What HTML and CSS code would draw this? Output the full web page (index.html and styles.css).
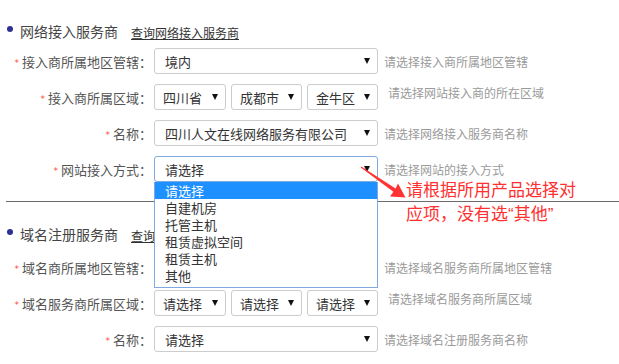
FILE: index.html
```html
<!DOCTYPE html>
<html lang="zh-CN">
<head>
<meta charset="utf-8">
<title>服务商信息</title>
<link rel="stylesheet" href="styles.css">
</head>
<body>
<div class="page">
  <section class="group">
    <h2 class="group-title"><span class="dot"></span><span>网络接入服务商</span><a class="query" href="#">查询网络接入服务商</a></h2>
    <div class="row">
      <label class="lbl"><span class="req">*</span>接入商所属地区管辖：</label>
      <div class="sel sel-wide"><span class="val">境内</span><span class="caret"></span></div>
      <span class="hint">请选择接入商所属地区管辖</span>
    </div>
    <div class="row">
      <label class="lbl"><span class="req">*</span>接入商所属区域：</label>
      <div class="sel-group">
        <div class="sel sel-small sel-first"><span class="val">四川省</span><span class="caret"></span></div>
        <div class="sel sel-small"><span class="val">成都市</span><span class="caret"></span></div>
        <div class="sel sel-small"><span class="val">金牛区</span><span class="caret"></span></div>
      </div>
      <span class="hint hint-up">请选择网站接入商的所在区域</span>
    </div>
    <div class="row">
      <label class="lbl"><span class="req">*</span>名称：</label>
      <div class="sel sel-wide"><span class="val">四川人文在线网络服务有限公司</span><span class="caret"></span></div>
      <span class="hint">请选择网络接入服务商名称</span>
    </div>
    <div class="row">
      <label class="lbl"><span class="req">*</span>网站接入方式：</label>
      <div class="sel sel-wide sel-focus"><span class="val">请选择</span><span class="caret"></span>
        <ul class="dropdown">
          <li class="active">请选择</li>
          <li>自建机房</li>
          <li>托管主机</li>
          <li>租赁虚拟空间</li>
          <li>租赁主机</li>
          <li>其他</li>
        </ul>
      </div>
      <span class="hint">请选择网站的接入方式</span>
    </div>
  </section>
  <hr class="divider">
  <section class="group">
    <h2 class="group-title group-title-second"><span class="dot"></span><span>域名注册服务商</span><a class="query" href="#">查询域名注册服务商</a></h2>
    <div class="row">
      <label class="lbl"><span class="req">*</span>域名商所属地区管辖：</label>
      <div class="sel sel-wide"><span class="val">请选择</span><span class="caret"></span></div>
      <span class="hint">请选择域名服务商所属地区管辖</span>
    </div>
    <div class="row">
      <label class="lbl"><span class="req">*</span>域名服务商所属区域：</label>
      <div class="sel-group">
        <div class="sel sel-small sel-first"><span class="val">请选择</span><span class="caret"></span></div>
        <div class="sel sel-small"><span class="val">请选择</span><span class="caret"></span></div>
        <div class="sel sel-small"><span class="val">请选择</span><span class="caret"></span></div>
      </div>
      <span class="hint hint-up">请选择域名服务商所属区域</span>
    </div>
    <div class="row">
      <label class="lbl"><span class="req">*</span>名称：</label>
      <div class="sel sel-wide"><span class="val">请选择</span><span class="caret"></span></div>
      <span class="hint">请选择域名注册服务商名称</span>
    </div>
  </section>

  <div class="note">请根据所用产品选择对<br>应项，没有选<span class="q">“</span>其他<span class="q">”</span></div>
  <svg class="pointer" width="60" height="45" viewBox="0 0 60 45">
    <polygon points="6.3,6.6 40.6,28.4 43,23.5 50.5,37.5 35,36.5 38.4,31.7 5.7,7.4" fill="#ff3333"/>
  </svg>
</div>
</body>
</html>
```

FILE: styles.css
```css
* {
  box-sizing: border-box;
  margin: 0;
  padding: 0;
}

html, body {
  background: #fff;
}

body {
  font-family: "Noto Sans CJK SC", "Microsoft YaHei", sans-serif;
  color: #555;
}

.page {
  position: relative;
  width: 619px;
  height: 364px;
  overflow: hidden;
  padding: 21px 0 0 6px;
}

.group-title {
  display: flex;
  align-items: center;
  height: 20px;
  margin-bottom: 7px;
  font-weight: normal;
  font-size: 14px;
  color: #444;
}

.group-title-second {
  margin-top: 22px;
  margin-bottom: 10px;
}

.dot {
  width: 6px;
  height: 6px;
  border-radius: 50%;
  background: #2e3192;
  margin: 0 7px 4px 1px;
}

.query {
  margin-left: 13px;
  margin-top: 2px;
  font-size: 12px;
  color: #333;
  text-decoration: underline;
}

.row {
  display: flex;
  align-items: center;
  height: 26px;
  margin-bottom: 10px;
}

.lbl {
  width: 146px;
  margin-right: 2px;
  text-align: right;
  font-size: 13px;
  color: #555;
  white-space: nowrap;
}

.req {
  color: #ff4a3a;
  font-family: "DejaVu Sans", sans-serif;
  font-size: 9px;
  margin-right: 3px;
  vertical-align: 1px;
}

.sel-group {
  display: flex;
  gap: 5px;
}

.sel {
  position: relative;
  display: flex;
  align-items: center;
  height: 26px;
  border: 1px solid #ccc;
  border-radius: 3px;
  background: #fff;
  padding: 0 7px 0 10px;
  font-size: 13px;
  color: #333;
}

.sel .val {
  flex: 1;
  white-space: nowrap;
}

.sel-wide {
  width: 224px;
}

.sel-small {
  width: 71px;
  padding-left: 8px;
}

.sel-first {
  width: 72px;
}

.caret {
  width: 0;
  height: 0;
  border-left: 3.5px solid transparent;
  border-right: 3.5px solid transparent;
  border-top: 6px solid #111;
}

.sel-focus {
  border-color: #7fa9e0;
}

.dropdown {
  position: absolute;
  left: -1px;
  top: calc(100% + 1px);
  width: 224px;
  border: 1px solid #7fa9e0;
  border-top: none;
  background: #fff;
  list-style: none;
  font-size: 13px;
  color: #333;
  padding-bottom: 3px;
  z-index: 5;
}

.dropdown li {
  height: 17px;
  line-height: 17px;
  padding-left: 10px;
}

.dropdown li.active {
  background: #1e90ff;
  color: #fff;
}

.hint {
  margin-left: 6px;
  font-size: 12px;
  color: #9a9a9a;
  white-space: nowrap;
}

.hint-up {
  margin-left: 10px;
  align-self: flex-start;
  line-height: 17px;
}

.divider {
  border: none;
  border-top: 1px solid #6b6b6b;
  margin-top: 19px;
}

.note {
  position: absolute;
  left: 406px;
  top: 177px;
  font-size: 17px;
  line-height: 24px;
  color: #ff3030;
  white-space: nowrap;
  z-index: 6;
}

.note .q {
  font-family: "Liberation Sans", sans-serif;
}

.pointer {
  position: absolute;
  left: 355px;
  top: 160px;
  z-index: 6;
}
```
